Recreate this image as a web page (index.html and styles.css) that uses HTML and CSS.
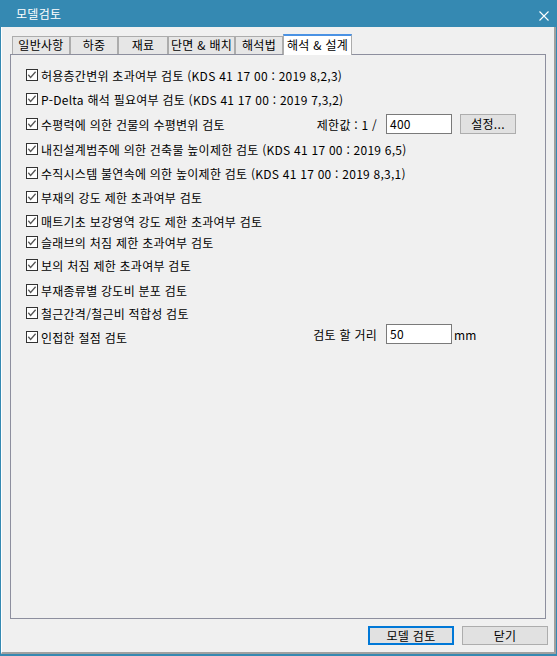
FILE: index.html
```html
<!DOCTYPE html>
<html lang="ko">
<head>
    <meta charset="UTF-8">
    <title>모델검토</title>
    <link rel="stylesheet" href="styles.css">
</head>
<body>
    <div class="window">
        <div class="titlebar">
            <span class="title">모델검토</span>
            <svg class="close" width="10" height="10" viewBox="0 0 10 10">
                <path d="M0.5 0.5 L9.5 9.5 M9.5 0.5 L0.5 9.5" stroke="#fff" stroke-width="1.1" fill="none"/>
            </svg>
        </div>
        <div class="client">
            <div class="tabs">
                <div class="tab">일반사항</div>
                <div class="tab">하중</div>
                <div class="tab">재료</div>
                <div class="tab">단면 &amp; 배치</div>
                <div class="tab">해석법</div>
                <div class="tab active">해석 &amp; 설계</div>
            </div>
            <div class="page">
                <div class="row">
                    <label class="check"><svg class="box" width="12" height="12" viewBox="0 0 12 12"><rect x="0.5" y="0.5" width="11" height="11" fill="#fff" stroke="#333"/><polyline points="2.3,5.8 4.6,8.4 9.6,2.8" fill="none" stroke="#555" stroke-width="1.3"/></svg>허용층간변위 초과여부 검토 (KDS 41 17 00 : 2019 8,2,3)</label>
                </div>
                <div class="row">
                    <label class="check"><svg class="box" width="12" height="12" viewBox="0 0 12 12"><rect x="0.5" y="0.5" width="11" height="11" fill="#fff" stroke="#333"/><polyline points="2.3,5.8 4.6,8.4 9.6,2.8" fill="none" stroke="#555" stroke-width="1.3"/></svg>P-Delta 해석 필요여부 검토 (KDS 41 17 00 : 2019 7,3,2)</label>
                </div>
                <div class="row">
                    <label class="check short"><svg class="box" width="12" height="12" viewBox="0 0 12 12"><rect x="0.5" y="0.5" width="11" height="11" fill="#fff" stroke="#333"/><polyline points="2.3,5.8 4.6,8.4 9.6,2.8" fill="none" stroke="#555" stroke-width="1.3"/></svg>수평력에 의한 건물의 수평변위 검토</label>
                    <span class="side-label">제한값 : 1 /</span>
                    <span class="field">400</span>
                    <button class="btn small">설정...</button>
                </div>
                <div class="row">
                    <label class="check"><svg class="box" width="12" height="12" viewBox="0 0 12 12"><rect x="0.5" y="0.5" width="11" height="11" fill="#fff" stroke="#333"/><polyline points="2.3,5.8 4.6,8.4 9.6,2.8" fill="none" stroke="#555" stroke-width="1.3"/></svg>내진설계범주에 의한 건축물 높이제한 검토 (KDS 41 17 00 : 2019 6,5)</label>
                </div>
                <div class="row">
                    <label class="check"><svg class="box" width="12" height="12" viewBox="0 0 12 12"><rect x="0.5" y="0.5" width="11" height="11" fill="#fff" stroke="#333"/><polyline points="2.3,5.8 4.6,8.4 9.6,2.8" fill="none" stroke="#555" stroke-width="1.3"/></svg>수직시스템 불연속에 의한 높이제한 검토 (KDS 41 17 00 : 2019 8,3,1)</label>
                </div>
                <div class="row">
                    <label class="check"><svg class="box" width="12" height="12" viewBox="0 0 12 12"><rect x="0.5" y="0.5" width="11" height="11" fill="#fff" stroke="#333"/><polyline points="2.3,5.8 4.6,8.4 9.6,2.8" fill="none" stroke="#555" stroke-width="1.3"/></svg>부재의 강도 제한 초과여부 검토</label>
                </div>
                <div class="row">
                    <label class="check"><svg class="box" width="12" height="12" viewBox="0 0 12 12"><rect x="0.5" y="0.5" width="11" height="11" fill="#fff" stroke="#333"/><polyline points="2.3,5.8 4.6,8.4 9.6,2.8" fill="none" stroke="#555" stroke-width="1.3"/></svg>매트기초 보강영역 강도 제한 초과여부 검토</label>
                </div>
                <div class="row">
                    <label class="check"><svg class="box" width="12" height="12" viewBox="0 0 12 12"><rect x="0.5" y="0.5" width="11" height="11" fill="#fff" stroke="#333"/><polyline points="2.3,5.8 4.6,8.4 9.6,2.8" fill="none" stroke="#555" stroke-width="1.3"/></svg>슬래브의 처짐 제한 초과여부 검토</label>
                </div>
                <div class="row">
                    <label class="check"><svg class="box" width="12" height="12" viewBox="0 0 12 12"><rect x="0.5" y="0.5" width="11" height="11" fill="#fff" stroke="#333"/><polyline points="2.3,5.8 4.6,8.4 9.6,2.8" fill="none" stroke="#555" stroke-width="1.3"/></svg>보의 처짐 제한 초과여부 검토</label>
                </div>
                <div class="row">
                    <label class="check"><svg class="box" width="12" height="12" viewBox="0 0 12 12"><rect x="0.5" y="0.5" width="11" height="11" fill="#fff" stroke="#333"/><polyline points="2.3,5.8 4.6,8.4 9.6,2.8" fill="none" stroke="#555" stroke-width="1.3"/></svg>부재종류별 강도비 분포 검토</label>
                </div>
                <div class="row">
                    <label class="check"><svg class="box" width="12" height="12" viewBox="0 0 12 12"><rect x="0.5" y="0.5" width="11" height="11" fill="#fff" stroke="#333"/><polyline points="2.3,5.8 4.6,8.4 9.6,2.8" fill="none" stroke="#555" stroke-width="1.3"/></svg>철근간격/철근비 적합성 검토</label>
                </div>
                <div class="row distance">
                    <label class="check short"><svg class="box" width="12" height="12" viewBox="0 0 12 12"><rect x="0.5" y="0.5" width="11" height="11" fill="#fff" stroke="#333"/><polyline points="2.3,5.8 4.6,8.4 9.6,2.8" fill="none" stroke="#555" stroke-width="1.3"/></svg>인접한 절점 검토</label>
                    <span class="side-label">검토 할 거리</span>
                    <span class="field">50</span>
                    <span class="unit">mm</span>
                </div>
            </div>
            <div class="footer">
                <button class="btn default">모델 검토</button>
                <button class="btn">닫기</button>
            </div>
        </div>
    </div>
</body>
</html>
```

FILE: styles.css
```css
body {
    margin: 0;
    font-family: "Noto Sans CJK KR", "Noto Sans", sans-serif;
    font-size: 12px;
    color: #000;
}

.window {
    width: 557px;
    height: 656px;
    background: #3589b2;
    display: flex;
    flex-direction: column;
    overflow: hidden;
}

.titlebar {
    height: 27px;
    display: flex;
    align-items: center;
    justify-content: space-between;
    padding: 0 8px 0 16px;
    color: #fff;
    flex-shrink: 0;
}

.title {
    font-size: 12px;
    letter-spacing: 0.3px;
}

.close {
    margin-top: 4px;
}

.client {
    flex: 1;
    margin: 0 1px 2px 1px;
    border-left: 1px solid #fff;
    border-right: 2px solid #a0a0a0;
    border-bottom: 2px solid #a0a0a0;
    background: #f0f0f0;
    padding: 7px 8px 0 8px;
    display: flex;
    flex-direction: column;
}

/* tabs */
.tabs {
    display: flex;
    align-items: flex-end;
    height: 20px;
    padding-left: 2px;
}

.tab {
    box-sizing: border-box;
    height: 18px;
    border: 1px solid #acacac;
    border-bottom: none;
    background: #e6e6e6;
    text-align: center;
    line-height: 16px;
    white-space: nowrap;
    letter-spacing: 0.3px;
}

.tab:nth-child(1) { width: 58px; }
.tab:nth-child(2) { width: 48px; }
.tab:nth-child(3) { width: 50px; }
.tab:nth-child(4) { width: 67px; }
.tab:nth-child(5) { width: 48px; }

.tab.active {
    width: 69px;
    height: 21px;
    margin-bottom: -1px;
    background: #fff;
    border-top: 2px solid #4a92e4;
    line-height: 18px;
    position: relative;
    z-index: 1;
}

/* page */
.page {
    flex: 1;
    border: 1px solid #8d8f9e;
    padding: 8px 0 0 15px;
}

.row {
    display: flex;
    align-items: center;
    height: 24px;
    white-space: nowrap;
    letter-spacing: 0.25px;
}

.row:nth-child(3),
.row:nth-child(4),
.row:nth-child(10) { margin-top: 1px; }
.row:nth-child(8) { margin-top: -3px; }
.row:nth-child(9),
.row:nth-child(11) { margin-top: -1px; }

.check {
    display: flex;
    align-items: center;
    gap: 3px;
}

.check.short {
    width: 279px;
}

.box {
    flex-shrink: 0;
}

.side-label {
    box-sizing: border-box;
    width: 81px;
    padding-right: 9px;
    text-align: right;
}

.field {
    box-sizing: border-box;
    width: 66px;
    height: 20px;
    border: 1px solid #7a7a7a;
    background: #fff;
    padding: 1px 3px 0;
    line-height: 15px;
}

.distance .side-label,
.distance .field,
.distance .unit {
    margin-bottom: 6px;
}

.unit {
    margin-left: 2px;
}

/* buttons */
.btn {
    font: inherit;
    box-sizing: border-box;
    background: #e1e1e1;
    border: 1px solid #adadad;
    color: #000;
    padding: 0;
    line-height: 16px;
    letter-spacing: 0.3px;
}

.btn.small {
    width: 56px;
    height: 20px;
    margin-left: 8px;
}

.footer {
    display: flex;
    justify-content: flex-end;
    gap: 8px;
    padding: 7px 0 7px 0;
    margin-right: -2px;
}

.footer .btn {
    width: 86px;
    height: 19px;
}

.btn.default {
    border: 2px solid #0078d7;
}
```
